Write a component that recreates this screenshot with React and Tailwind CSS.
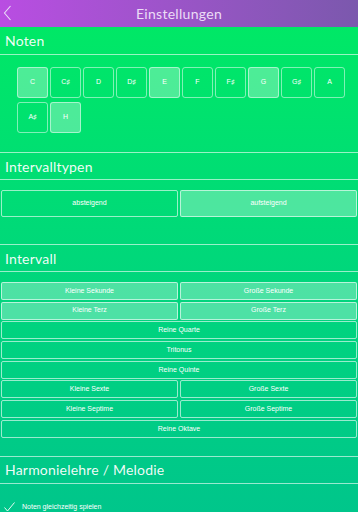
import React from 'react';

const notes = [
  { n: 'C', on: true },
  { n: 'C♯', on: false },
  { n: 'D', on: false },
  { n: 'D♯', on: false },
  { n: 'E', on: true },
  { n: 'F', on: false },
  { n: 'F♯', on: false },
  { n: 'G', on: true },
  { n: 'G♯', on: false },
  { n: 'A', on: false },
  { n: 'A♯', on: false },
  { n: 'H', on: true },
];

const intervals = [
  [{ t: 'Kleine Sekunde', on: true }, { t: 'Große Sekunde', on: true }],
  [{ t: 'Kleine Terz', on: true }, { t: 'Große Terz', on: true }],
  [{ t: 'Reine Quarte' }],
  [{ t: 'Tritonus' }],
  [{ t: 'Reine Quinte' }],
  [{ t: 'Kleine Sexte' }, { t: 'Große Sexte' }],
  [{ t: 'Kleine Septime' }, { t: 'Große Septime' }],
  [{ t: 'Reine Oktave' }],
];

const SectionTitle = ({ children, top = true }) => (
  <div
    className={`h-[28px] flex items-center px-[5px] border-b border-white/60 text-[14px] text-white/95 font-['Lato',sans-serif] tracking-[0.2px] ${
      top ? 'border-t' : ''
    }`}
  >
    {children}
  </div>
);

const App = () => {
  return (
    <div className="w-[358px] h-[512px] overflow-hidden bg-gradient-to-b from-[#00ea63] to-[#00c68b] font-['Liberation_Sans',sans-serif]">
      {/* Header */}
      <div className="relative h-[27px] bg-gradient-to-r from-[#b94de2] to-[#7b58ad] flex items-center justify-center">
        <svg className="absolute left-[3px] top-[5px]" width="9" height="16" viewBox="0 0 9 16">
          <polyline points="7.5,1 1.5,8 7.5,15" fill="none" stroke="#eadcf7" strokeWidth="1.1" />
        </svg>
        <span className="text-[14px] text-[#ecdcf6] font-['Lato',sans-serif] tracking-[0.3px]">Einstellungen</span>
      </div>

      {/* Noten */}
      <SectionTitle top={false}>Noten</SectionTitle>
      <div className="pt-[12px] pb-[19px] pl-[17px] flex flex-wrap gap-x-[2px] gap-y-[4px] w-[350px]">
        {notes.map((x) => (
          <div
            key={x.n}
            className={`w-[31px] h-[31px] rounded-[3px] border border-white/50 flex items-center justify-center text-[7px] text-white ${
              x.on ? 'bg-white/30' : ''
            }`}
          >
            {x.n}
          </div>
        ))}
      </div>

      {/* Intervalltypen */}
      <SectionTitle>Intervalltypen</SectionTitle>
      <div className="mt-[10px] mb-[27px] px-[1px] flex gap-[2px]">
        <div className="flex-1 h-[27px] rounded-[2px] border border-white/60 flex items-center justify-center text-[7px] text-white">
          absteigend
        </div>
        <div className="flex-1 h-[27px] rounded-[2px] border border-white/60 bg-white/30 flex items-center justify-center text-[7px] text-white">
          aufsteigend
        </div>
      </div>

      {/* Intervall */}
      <SectionTitle>Intervall</SectionTitle>
      <div className="mt-[10px] mb-[18px] px-[1px] flex flex-col gap-[1.7px]">
        {intervals.map((row, i) => (
          <div key={i} className="flex gap-[2px]">
            {row.map((b) => (
              <div
                key={b.t}
                className={`flex-1 h-[18px] rounded-[2px] border border-white/60 flex items-center justify-center text-[7px] text-white ${
                  b.on ? 'bg-white/30' : ''
                }`}
              >
                {b.t}
              </div>
            ))}
          </div>
        ))}
      </div>

      {/* Harmonielehre */}
      <SectionTitle>Harmonielehre / Melodie</SectionTitle>
      <div className="mt-[18px] pl-[4px] flex items-center gap-[7px]">
        <svg width="11" height="10" viewBox="0 0 11 10">
          <polyline points="0.5,5.5 3.5,9 10.5,0.5" fill="none" stroke="white" strokeWidth="0.9" />
        </svg>
        <span className="text-[7px] text-white">Noten gleichzeitig spielen</span>
      </div>
    </div>
  );
};

export default App;
